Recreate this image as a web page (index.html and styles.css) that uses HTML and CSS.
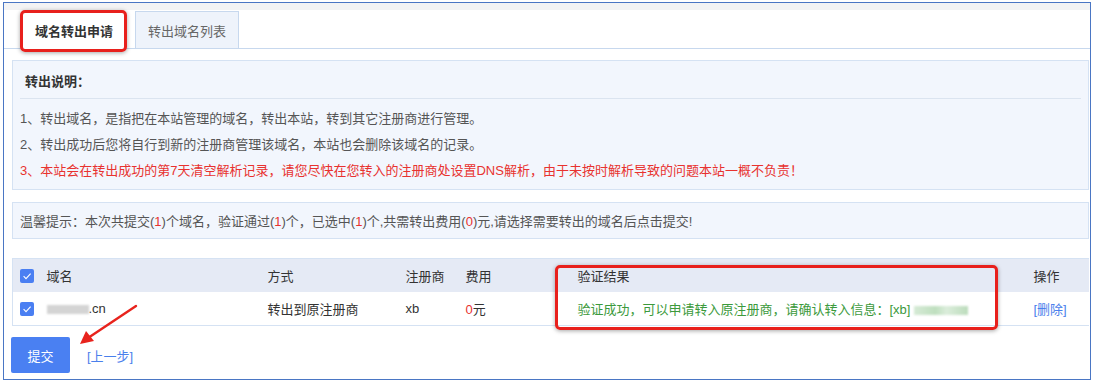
FILE: index.html
```html
<!DOCTYPE html>
<html lang="zh">

<head>
    <meta charset="utf-8">
    <title>域名转出申请</title>
    <link rel="stylesheet" href="styles.css">
</head>

<body>
    <div class="page">
        <div class="ramme">
            <div class="topstribe"></div>

            <nav class="faner">
                <span class="fane aktiv">域名转出申请</span>
                <span class="fane">转出域名列表</span>
            </nav>

            <section class="info">
                <h3 class="info-titel">转出说明：</h3>
                <div class="info-tekst">
                    <p>1、转出域名，是指把在本站管理的域名，转出本站，转到其它注册商进行管理。</p>
                    <p>2、转出成功后您将自行到新的注册商管理该域名，本站也会删除该域名的记录。</p>
                    <p class="roed">3、本站会在转出成功的第7天清空解析记录，请您尽快在您转入的注册商处设置DNS解析，由于未按时解析导致的问题本站一概不负责！</p>
                </div>
            </section>

            <section class="tip">
                温馨提示：本次共提交(<b>1</b>)个域名，验证通过(<b>1</b>)个，已选中(<b>1</b>)个,共需转出费用(<b>0</b>)元,请选择需要转出的域名后点击提交!
            </section>

            <table class="liste">
                <colgroup>
                    <col style="width:34px">
                    <col style="width:221px">
                    <col style="width:138px">
                    <col style="width:60px">
                    <col style="width:112px">
                    <col style="width:456px">
                    <col style="width:55px">
                </colgroup>
                <thead>
                    <tr>
                        <th class="boks"><span class="flueben"><svg width="14" height="14" viewBox="0 0 14 14"><path d="M3.6 7.2 L6 9.6 L10.6 4.6" fill="none" stroke="#fff" stroke-width="1.1"/></svg></span></th>
                        <th>域名</th>
                        <th>方式</th>
                        <th>注册商</th>
                        <th>费用</th>
                        <th>验证结果</th>
                        <th>操作</th>
                    </tr>
                </thead>
                <tbody>
                    <tr>
                        <td class="boks"><span class="flueben"><svg width="14" height="14" viewBox="0 0 14 14"><path d="M3.6 7.2 L6 9.6 L10.6 4.6" fill="none" stroke="#fff" stroke-width="1.1"/></svg></span></td>
                        <td><span class="slør graa"></span>.cn</td>
                        <td>转出到原注册商</td>
                        <td>xb</td>
                        <td><b class="nul">0</b>元</td>
                        <td class="groen">验证成功，可以申请转入原注册商，请确认转入信息：[xb] <span class="slør groenslør"></span></td>
                        <td><a class="link" href="#">[删除]</a></td>
                    </tr>
                </tbody>
            </table>

            <div class="knapper">
                <button class="send">提交</button>
                <a class="link tilbage" href="#">[上一步]</a>
            </div>
        </div>

        <!-- røde markeringer oven på skærmbilledet -->
        <div class="markering fane-markering"></div>
        <div class="markering resultat-markering"></div>
        <svg class="pil" width="70" height="56" viewBox="0 0 70 56">
            <line x1="64" y1="8" x2="16" y2="40" stroke="#e8231d" stroke-width="2.4" stroke-linecap="round"/>
            <polygon points="8,46 14,33 22,43" fill="#e8231d"/>
        </svg>
    </div>
</body>

</html>
```

FILE: styles.css
```css
body {
    margin: 0;
    background: #ffffff;
    font-family: "Liberation Sans", "Noto Sans CJK SC", sans-serif;
    font-size: 13px;
    color: #555555;
}

.page {
    position: relative;
    width: 1095px;
    height: 384px;
}

.ramme {
    margin: 2px 0 0 3px;
    width: 1086px;
    height: 376px;
    border: 1px solid #4a76c4;
    overflow: hidden;
}

.topstribe {
    height: 7px;
    background: #f3f3f4;
}

/* faner */
.faner {
    display: flex;
    gap: 9px;
    padding-left: 18px;
    height: 38px;
    border-bottom: 1px solid #c7d8ee;
}

.fane {
    display: flex;
    align-items: center;
    justify-content: center;
    width: 102px;
    color: #666666;
    background: #eef3fb;
    border: 1px solid #c7d8ee;
    border-bottom: none;
    margin-top: 1px;
}

.fane.aktiv {
    background: #ffffff;
    color: #333333;
    font-weight: bold;
    margin-top: 0;
    height: 39px;
    border-color: #ffffff;
}

/* info boks */
.info {
    margin: 11px 1px 0 8px;
    background: #f2f6fd;
    border: 1px solid #d5e2f3;
    height: 128px;
}

.info-titel {
    margin: 0 7px 0 7px;
    padding-left: 5px;
    height: 37px;
    line-height: 41px;
    font-size: 13px;
    color: #333333;
    border-bottom: 1px solid #dbe4f0;
}

.info-tekst {
    padding: 7px 0 0 7px;
}

.info-tekst p {
    margin: 0;
    line-height: 26px;
}

.roed {
    color: #e8322f;
}

/* tip */
.tip {
    margin: 12px 1px 0 8px;
    padding-left: 7px;
    height: 35px;
    line-height: 37px;
    background: #f2f6fd;
    border: 1px solid #d5e2f3;
}

.tip b {
    font-weight: normal;
    color: #e8322f;
}

/* tabel */
.liste {
    margin: 19px 0 0 8px;
    width: 1076px;
    table-layout: fixed;
    border-collapse: collapse;
    border-top: 1px solid #d5e2f3;
    border-left: 1px solid #d5e2f3;
}

.liste th {
    height: 33px;
    padding: 0;
    text-align: left;
    font-weight: normal;
    color: #333333;
    background: #e5eaf5;
}

.liste td {
    height: 33px;
    padding: 0;
    color: #333333;
    border-bottom: 1px solid #d5e2f3;
}

.liste .boks {
    padding-left: 7px;
}

.flueben {
    display: inline-block;
    width: 14px;
    height: 14px;
    background: #4a7ff2;
    border-radius: 2px;
    vertical-align: middle;
    line-height: 0;
}

.slør {
    display: inline-block;
    height: 9px;
    vertical-align: middle;
    filter: blur(1px);
}

.graa {
    width: 42px;
    background: #d4d4d4;
}

.groenslør {
    width: 54px;
    background: linear-gradient(90deg, #d6ead6, #bfdfbf 40%, #dbeddb 60%, #bcdcbc);
}

.nul {
    font-weight: normal;
    color: #e8322f;
}

.liste .groen {
    color: #3c9a3c;
}

.link {
    color: #4a80ec;
    text-decoration: none;
}

/* knapper */
.knapper {
    display: flex;
    align-items: center;
    margin: 11px 0 0 7px;
}

.send {
    width: 59px;
    height: 36px;
    border: none;
    border-radius: 2px;
    background: #4a80f2;
    color: #ffffff;
    font-family: "Liberation Sans", "Noto Sans CJK SC", sans-serif;
    font-size: 13px;
}

.tilbage {
    margin-left: 17px;
}

/* røde markeringer */
.markering {
    position: absolute;
    border: 3px solid #e8201c;
    border-radius: 5px;
    box-shadow: 0 1px 4px rgba(0, 0, 0, 0.35);
}

.fane-markering {
    left: 20px;
    top: 8px;
    width: 101px;
    height: 36px;
}

.resultat-markering {
    left: 555px;
    top: 263px;
    width: 437px;
    height: 59px;
}

.pil {
    position: absolute;
    left: 72px;
    top: 296px;
}
```
